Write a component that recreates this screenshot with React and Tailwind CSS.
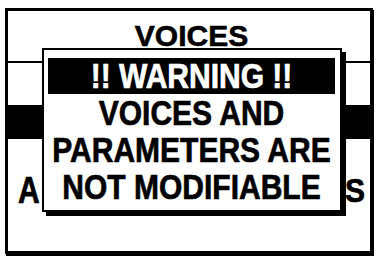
export default function App() {
  const txt =
    "font-['Liberation_Sans',Arial,sans-serif] font-bold whitespace-nowrap [-webkit-text-stroke:0.6px_currentColor]";

  return (
    <div className="relative w-[379px] h-[259px] bg-white overflow-hidden pl-[5px] pt-[8px]">
      {/* screen frame behind the popup */}
      <div className="w-[368px] h-[246px] border-[3px] border-black shadow-[1px_2px_0_#000] flex flex-col text-black">
        <div className={`h-[52px] border-b-2 border-black flex items-center justify-center pl-[5px] ${txt}`}>
          <span className="text-[30px] leading-none">VOICES</span>
        </div>
        <div className="h-[42px]" />
        <div className="h-[34px] bg-black" />
        <div className={`h-[76px] flex items-center justify-between pl-[10px] pr-[5px] pt-[28px] ${txt}`}>
          <span className="inline-block text-[30px] leading-none scale-y-[1.2]">A</span>
          <span className="inline-block text-[30px] leading-none scale-y-[1.1]">S</span>
        </div>
      </div>

      {/* warning popup */}
      <div className="absolute left-[42px] top-[48px] w-[300px] h-[164px] bg-white border-2 border-black shadow-[4px_4px_0_#000] pl-[4px] pr-[5px] pt-[8px] flex flex-col">
        <div className={`h-[36px] bg-black text-white flex items-center justify-center ${txt}`}>
          <span className="inline-block text-[30px] leading-none scale-y-[1.16]">!! WARNING !!</span>
        </div>
        <div className={`h-[37px] flex items-center justify-center text-black ${txt}`}>
          <span className="inline-block text-[30px] leading-none scale-y-[1.16]">VOICES AND</span>
        </div>
        <div className={`h-[37px] flex items-center justify-center text-black ${txt}`}>
          <span className="inline-block text-[30px] leading-none scale-y-[1.16]">PARAMETERS ARE</span>
        </div>
        <div className={`h-[37px] flex items-center justify-center text-black ${txt}`}>
          <span className="inline-block text-[30px] leading-none scale-y-[1.16]">NOT MODIFIABLE</span>
        </div>
      </div>
    </div>
  );
}
